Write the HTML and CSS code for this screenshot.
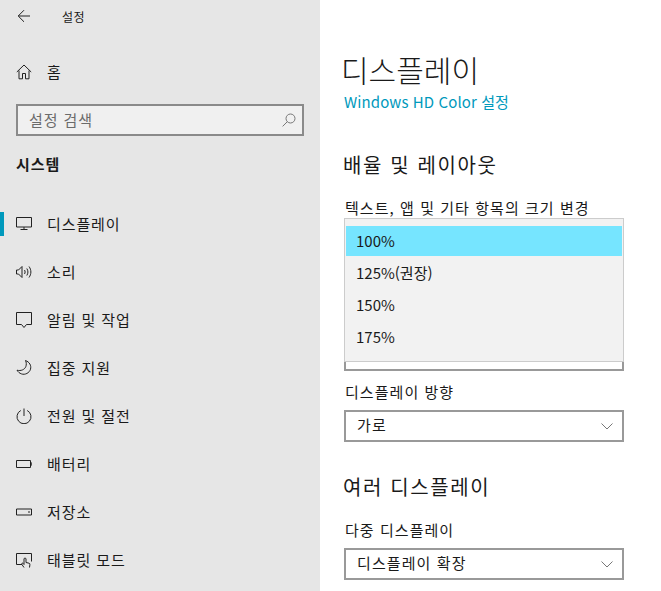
FILE: index.html
```html
<!DOCTYPE html>
<html lang="ko">
<head>
  <meta charset="UTF-8" />
  <title>설정</title>
  <link rel="stylesheet" href="styles.css">
</head>
<body>
  <div class="sidebar">
    <div class="topbar">
      <svg class="back" width="16" height="16" viewBox="0 0 16 16"><path d="M14 8H2.500M8 2.200 2.200 8 8 13.800" /></svg>
      <span class="app-title">설정</span>
    </div>
    <div class="nav-row home">
      <svg width="16" height="16" viewBox="0 0 16 16"><path d="M.8 8 8 1l7.200 7M3 6.500v8.300h3.500V9.500h3v5.300H13V6.500" /></svg>
      <span>홈</span>
    </div>
    <div class="search">
      <span>설정 검색</span>
      <svg width="14" height="14" viewBox="0 0 14 14"><circle cx="8.500" cy="5.500" r="4.500" /><path d="M5.300 8.700.6 13.400" /></svg>
    </div>
    <div class="group-title">시스템</div>
    <div class="nav-row active">
      <svg width="16" height="16" viewBox="0 0 16 16"><path d="M.5 1.500h15v9.500H.5zM8 11v2.500M4.500 13.500h7" /></svg>
      <span>디스플레이</span>
    </div>
    <div class="nav-row">
      <svg width="16" height="16" viewBox="0 0 16 16"><path d="M.5 6h2L6 2.500v11L2.500 10h-2zM8.500 6c.8 1.200.8 2.800 0 4M10.800 4.500c1.500 2.200 1.500 4.800 0 7M13 2.500c2.500 3.500 2.500 7.500 0 11" /></svg>
      <span>소리</span>
    </div>
    <div class="nav-row">
      <svg width="16" height="16" viewBox="0 0 16 16"><path d="M.5 .5h15v12h-5L8 15.500 5.500 12.500h-5z" /></svg>
      <span>알림 및 작업</span>
    </div>
    <div class="nav-row">
      <svg width="16" height="16" viewBox="0 0 16 16"><path d="M9.500.5c4 1.500 6 5 5 8.700-1 3.700-5.500 6-9 4.700-2-.7-3.500-2-4.500-3.700 4 1 7.500-.5 8.800-3.500.7-2 .7-4.200-.3-6.200z" /></svg>
      <span>집중 지원</span>
    </div>
    <div class="nav-row">
      <svg width="16" height="16" viewBox="0 0 16 16"><path d="M8 .5v7.500M4.800 2.500a7 7 0 1 0 6.400 0" /></svg>
      <span>전원 및 절전</span>
    </div>
    <div class="nav-row">
      <svg width="16" height="16" viewBox="0 0 16 16"><path d="M.5 4.500h14v7H.5zM14.500 7H16v2h-1.500" /></svg>
      <span>배터리</span>
    </div>
    <div class="nav-row">
      <svg width="16" height="16" viewBox="0 0 16 16"><path d="M.5 5h15v6H.5zM12 8h2" /></svg>
      <span>저장소</span>
    </div>
    <div class="nav-row">
      <svg width="16" height="16" viewBox="0 0 16 16"><path d="M6 12.500H.5v-11h15v8M8 15.500l-2.200-3.200c-.4-1 .6-1.500 1.200-1L8 12.500V7c0-1.300 2-1.300 2 0v3.500l3 .7c.8.200 1 .8.900 1.500l-.4 2.800" /></svg>
      <span>태블릿 모드</span>
    </div>
  </div>

  <div class="main">
    <h1>디스플레이</h1>
    <a class="link">Windows HD Color 설정</a>
    <h2 class="first">배율 및 레이아웃</h2>
    <label>텍스트, 앱 및 기타 항목의 크기 변경</label>
    <div class="select under"></div>
    <label class="tight">디스플레이 방향</label>
    <div class="select">
      <span>가로</span>
      <svg width="12" height="7" viewBox="0 0 12 7"><path d="M.5.500 6 6l5.500-5.500" /></svg>
    </div>
    <h2>여러 디스플레이</h2>
    <label>다중 디스플레이</label>
    <div class="select">
      <span>디스플레이 확장</span>
      <svg width="12" height="7" viewBox="0 0 12 7"><path d="M.5.500 6 6l5.500-5.500" /></svg>
    </div>

    <div class="popup">
      <div class="option selected">100%</div>
      <div class="option">125%(권장)</div>
      <div class="option">150%</div>
      <div class="option">175%</div>
    </div>
  </div>
</body>
</html>
```

FILE: styles.css
```css
:root {
  --sidebar: #e6e6e6;
  --accent: #0099bc;
  --text: #1a1a1a;
  --border: #999;
}
html, body {
  height: 100%;
}
body {
  margin: 0;
  display: flex;
  height: 591px;
  overflow: hidden;
  background: #fff;
  color: var(--text);
  font-family: "Noto Sans CJK KR", "Noto Sans", sans-serif;
  font-size: 15px;
}
svg {
  flex: none;
  fill: none;
  stroke: #222;
  stroke-width: 1;
}
.sidebar {
  width: 320px;
  flex: none;
  background: var(--sidebar);
}
.topbar {
  display: flex;
  align-items: center;
  height: 32px;
  padding-left: 16px;
}
.app-title {
  margin-left: 30px;
  font-size: 12px;
  letter-spacing: 0.4px;
}
.nav-row {
  position: relative;
  display: flex;
  align-items: center;
  gap: 15px;
  height: 48px;
  padding-left: 16px;
  letter-spacing: 0.9px;
}
.nav-row span {
  padding-bottom: 2px;
}
.nav-row.home {
  margin-top: 16px;
}
.nav-row.active::before {
  content: "";
  position: absolute;
  left: 0;
  top: 12px;
  width: 4px;
  height: 24px;
  background: var(--accent);
}
.search {
  display: flex;
  align-items: center;
  justify-content: space-between;
  box-sizing: border-box;
  width: 288px;
  height: 32px;
  margin: 8px 0 0 16px;
  padding: 0 6px 0 11px;
  background: #f0f0f0;
  border: 2px solid #8a8a8a;
  color: #6b6b6b;
  letter-spacing: 0.9px;
}
.search span {
  padding-bottom: 2px;
}
.search svg {
  stroke: #777;
}
.group-title {
  height: 64px;
  box-sizing: border-box;
  padding: 17px 0 0 16px;
  font-weight: 700;
  letter-spacing: 0.9px;
}
.main {
  position: relative;
  flex: 1;
  padding-left: 24px;
}
h1 {
  margin: 47px 0 0 -3px;
  font-size: 30px;
  font-weight: 300;
  line-height: 44px;
}
.link {
  display: block;
  color: var(--accent);
  font-size: 15px;
  line-height: 22px;
  letter-spacing: 0.1px;
}
h2 {
  margin: 30px 0 0 -1px;
  font-size: 20px;
  font-weight: 400;
  line-height: 30px;
  letter-spacing: 1.6px;
}
h2.first {
  margin-top: 37px;
}
label {
  display: block;
  margin: 17px 0 0 1px;
  font-size: 15px;
  line-height: 22px;
  letter-spacing: 1.05px;
}
label.tight {
  margin-top: 10px;
}
.select {
  display: flex;
  align-items: center;
  justify-content: space-between;
  box-sizing: border-box;
  width: 280px;
  height: 32px;
  margin-top: 7px;
  padding: 0 9px 0 11px;
  border: 2px solid var(--border);
  letter-spacing: 1.1px;
}
.select span {
  padding-bottom: 3px;
}
.select svg {
  stroke: #777;
}
.select.under {
  height: 152px;
  margin-top: 0;
}
.popup {
  position: absolute;
  left: 24px;
  top: 218px;
  box-sizing: border-box;
  width: 280px;
  height: 144px;
  padding: 7px 1px 0;
  background: #f2f2f2;
  border: 1px solid #ccc;
}
.option {
  display: flex;
  align-items: center;
  height: 32px;
  padding: 0 0 2px 10px;
  box-sizing: border-box;
}
.option.selected {
  height: 30px;
  margin-bottom: 1px;
  background: #76e5ff;
}
```
